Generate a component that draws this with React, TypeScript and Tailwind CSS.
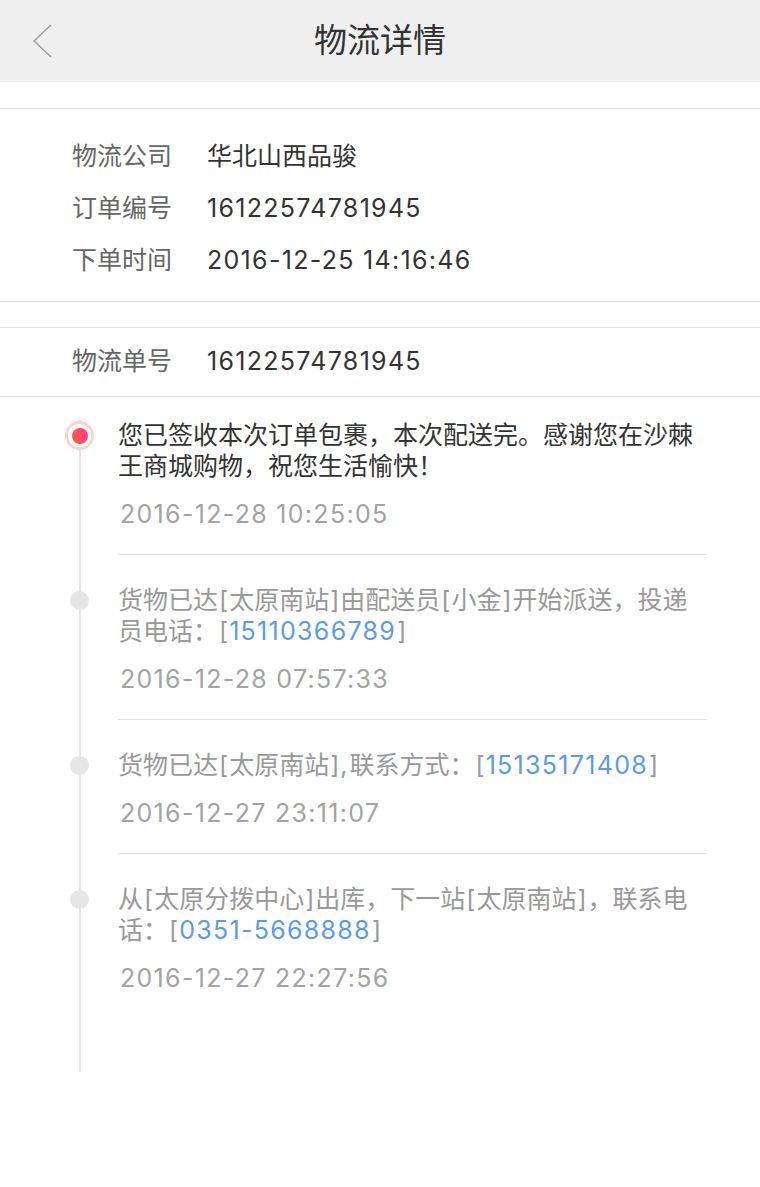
import React from "react";

const font = { fontFamily: 'Inter, "Noto Sans CJK SC", sans-serif' };

function Num({ children }: { children: React.ReactNode }) {
  return <span className="tracking-[1.3px]">{children}</span>;
}

function L() {
  return <span className="px-[1px]">[</span>;
}
function R() {
  return <span className="px-[1px]">]</span>;
}

function InfoRow({ label, value }: { label: string; value: React.ReactNode }) {
  return (
    <div className="flex items-center h-[52px] pl-[72px] text-[25px]">
      <div className="w-[135px] shrink-0 text-[#666]">{label}</div>
      <div className="text-[#333]">{value}</div>
    </div>
  );
}

function Link({ children }: { children: React.ReactNode }) {
  return <span className="text-[#5a9be6] tracking-[1.3px]">{children}</span>;
}

type Item = { active?: boolean; content: React.ReactNode; time: string; last?: boolean };

const items: Item[] = [
  {
    active: true,
    content: (
      <>
        您已签收本次订单包裹，本次配送完。感谢您在沙棘
        <br />
        王商城购物，祝您生活愉快！
      </>
    ),
    time: "2016-12-28 10:25:05",
  },
  {
    content: (
      <>
        货物已达<L />太原南站<R />由配送员<L />小金<R />开始派送，投递
        <br />
        员电话：<L />
        <Link>15110366789</Link>
        <R />
      </>
    ),
    time: "2016-12-28 07:57:33",
  },
  {
    content: (
      <>
        货物已达<L />太原南站<R />
        <span className="pr-[2px]">,</span>联系方式：<L />
        <Link>15135171408</Link>
        <R />
      </>
    ),
    time: "2016-12-27 23:11:07",
  },
  {
    content: (
      <>
        从<L />太原分拨中心<R />出库，下一站<L />太原南站<R />，联系电
        <br />
        话：<L />
        <Link>0351-5668888</Link>
        <R />
      </>
    ),
    time: "2016-12-27 22:27:56",
    last: true,
  },
];

export default function App() {
  return (
    <div className="w-[760px] min-h-[1187px] bg-white" style={font}>
      <header className="relative h-[82px] bg-[#efefef] flex items-center justify-center">
        <svg
          className="absolute left-[30px] top-[22px]"
          width="26"
          height="38"
          viewBox="0 0 26 38"
          fill="none"
        >
          <polyline points="21,3 4,19 21,35" stroke="#9a9a9a" strokeWidth="1.4" />
        </svg>
        <h1 className="text-[33px] text-[#333] font-normal">物流详情</h1>
      </header>

      <div className="h-[26px]" />

      <section className="border-y border-[#e3e3e3] pt-[22px] pb-[14px]">
        <InfoRow label="物流公司" value="华北山西品骏" />
        <InfoRow label="订单编号" value={<Num>16122574781945</Num>} />
        <InfoRow label="下单时间" value={<Num>2016-12-25 14:16:46</Num>} />
      </section>

      <div className="h-[25px]" />

      <section className="border-y border-[#e3e3e3]">
        <div className="flex items-center h-[68px] pl-[72px] text-[25px]">
          <div className="w-[135px] shrink-0 text-[#666]">物流单号</div>
          <div className="text-[#333]">
            <Num>16122574781945</Num>
          </div>
        </div>
      </section>

      <section className="relative pt-[23px] pb-[54px]">
        <div className="absolute left-[79px] top-[23px] bottom-0 w-[2px] bg-[#e6e6e6]" />
        {items.map((it, i) => (
          <div key={i} className={`relative flex ${i === 0 ? "" : "pt-[30px]"}`}>
            <div className="w-[118px] shrink-0">
              {it.active ? (
                <div className="ml-[65px] mt-[1px] w-[29px] h-[29px] rounded-full bg-[#ffd3cb] flex items-center justify-center">
                  <div className="w-[23px] h-[23px] rounded-full bg-white flex items-center justify-center">
                    <div className="w-[16px] h-[16px] rounded-full bg-gradient-to-r from-[#ff5a3c] to-[#ff3d86]" />
                  </div>
                </div>
              ) : (
                <div className="ml-[70px] mt-[6px] w-[19px] h-[19px] rounded-full bg-[#e6e6e6]" />
              )}
            </div>
            <div
              className={`w-[589px] ${it.last ? "" : "border-b border-[#e3e3e3]"} pb-[24px]`}
            >
              <p
                className={`text-[25px] leading-[31px] ${it.active ? "text-[#333]" : "text-[#999]"}`}
              >
                {it.content}
              </p>
              <p className="mt-[17px] text-[25px] leading-[31px] text-[#a3a3a3] pl-[2px] tracking-[1.3px]">
                {it.time}
              </p>
            </div>
          </div>
        ))}
      </section>
    </div>
  );
}
